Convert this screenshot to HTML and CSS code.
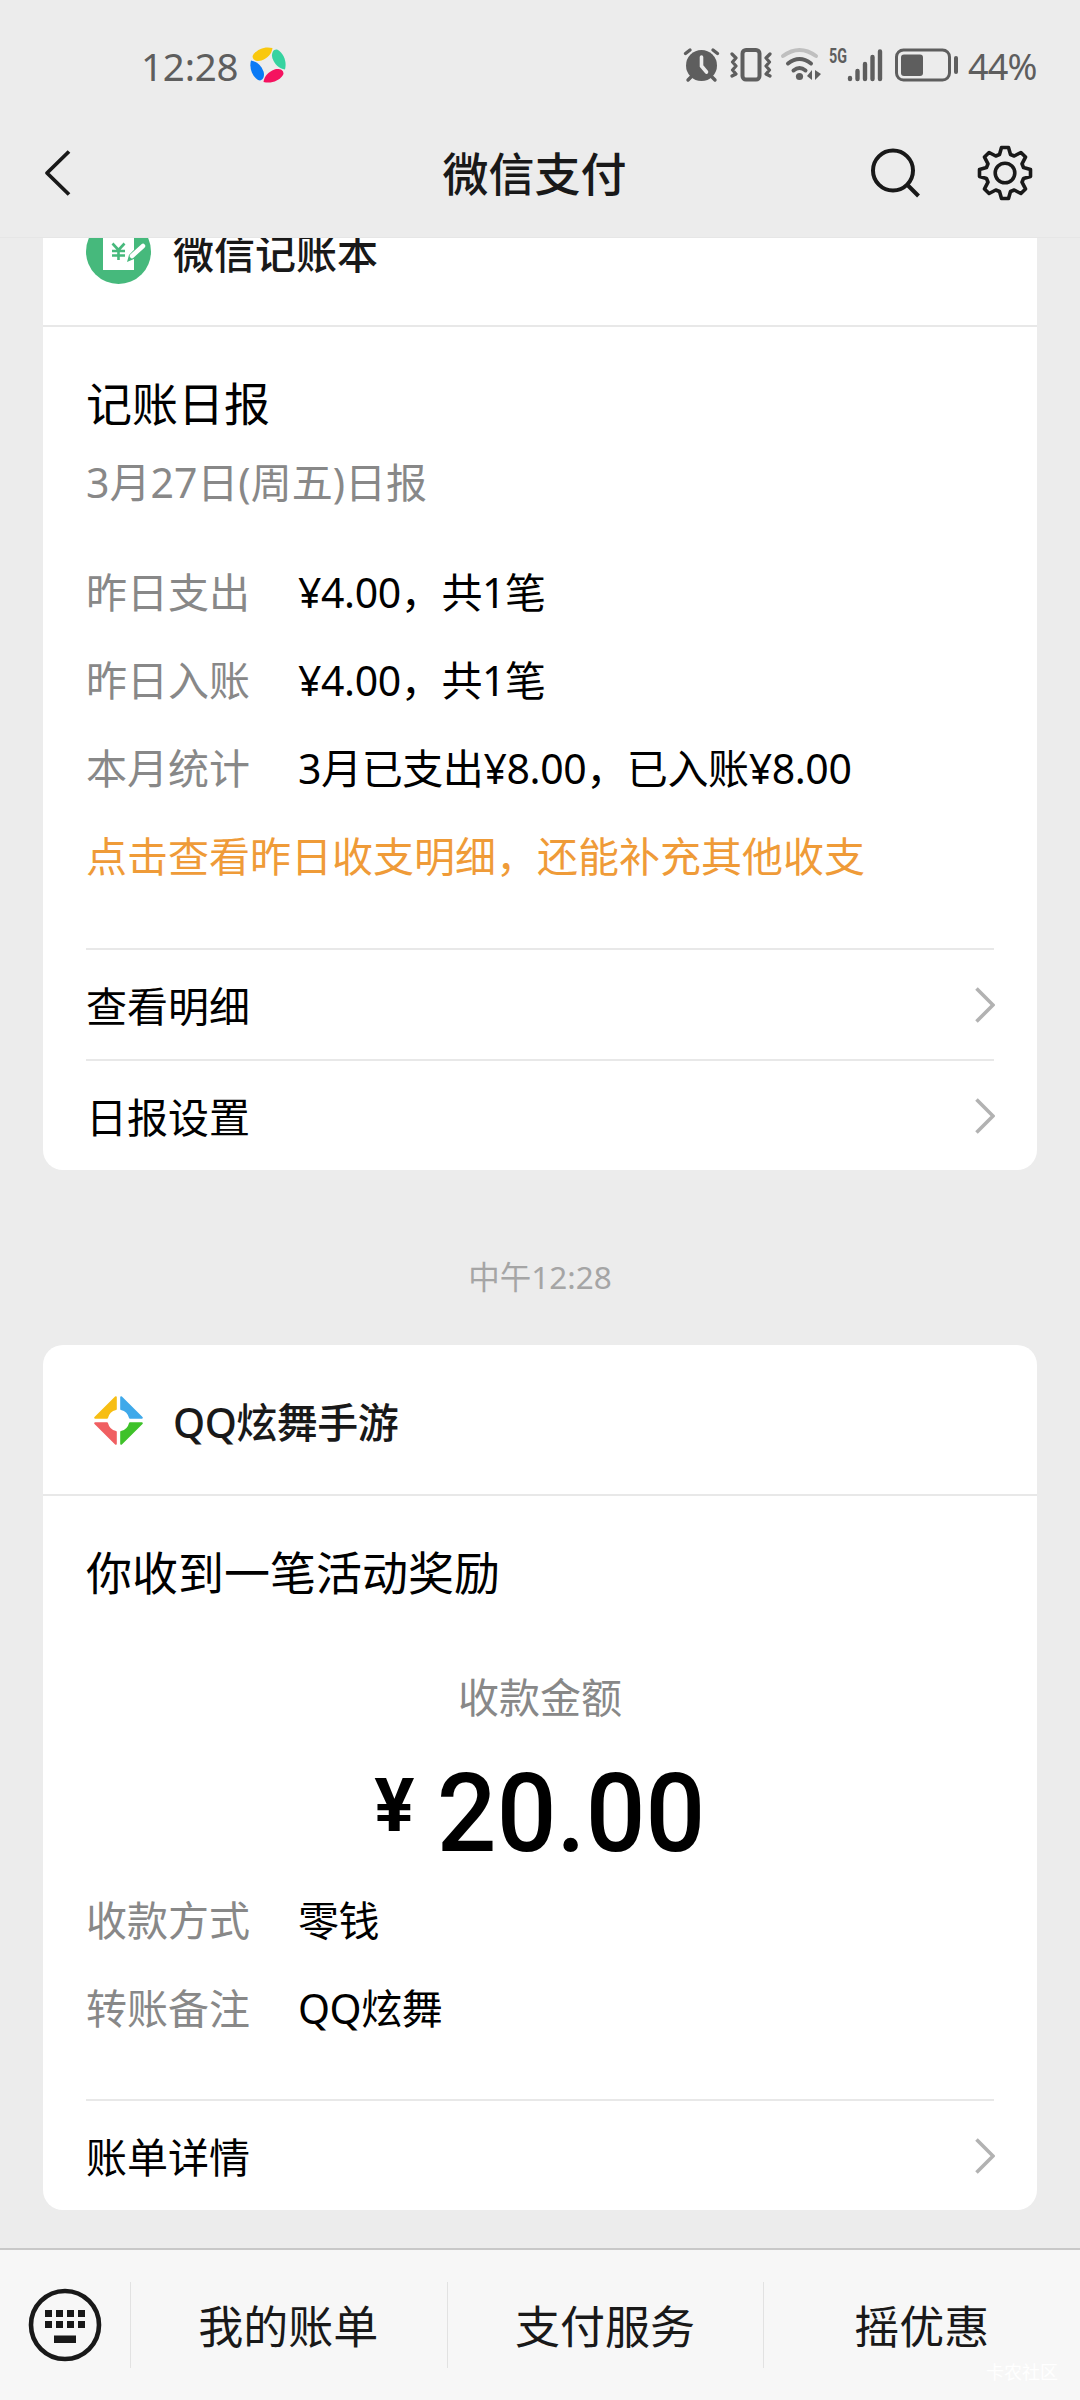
FILE: index.html
```html
<!DOCTYPE html>
<html lang="zh-CN">
<head>
<meta charset="utf-8">
<title>微信支付</title>
<link rel="stylesheet" href="styles.css">
</head>
<body>
<div class="screen">
  <div class="status">
    <span class="clock">12:28</span>
    <svg class="app-dot" width="36" height="36" viewBox="-18 -18 36 36">
      <defs><path id="petal" d="M4.500-17C-3-19-11-16-15-10C-17-5-11-3-6.500-4.500C0-7 3.500-11 4.500-17Z"/></defs>
      <use href="#petal" fill="#f9c80e"/>
      <use href="#petal" fill="#36d3a0" transform="rotate(90)"/>
      <use href="#petal" fill="#f5125f" transform="rotate(180)"/>
      <use href="#petal" fill="#0a7af5" transform="rotate(270)"/>
    </svg>
    <div class="indicators">
      <svg class="signals" width="268" height="36" viewBox="0 0 268 36" fill="none" stroke="#5e5e5e" stroke-linecap="round">
        <circle cx="17.500" cy="18.500" r="15.500" fill="#5e5e5e" stroke="none"/>
        <path d="M1.500 6.500L6 3M33.500 6.500L29 3M7 30L4 33M28 30L31 33" stroke-width="3.400"/>
        <path d="M17.500 10V19L22.500 25" stroke="#ececec" stroke-width="3.600"/>
        <rect x="58.500" y="3" width="17" height="29.500" rx="3.500" stroke-width="4"/>
        <path d="M48 7L52 11L48.500 15L52 19L48.500 23L52 27L48 29M86 7L82 11L85.500 15L82 19L85.500 23L82 27L86 29" stroke-width="3.200" stroke-linejoin="round"/>
        <path d="M99 9Q115.500-3 132 9" stroke="#bfbfbf" stroke-width="4"/>
        <path d="M104 16.500Q115.500 7.500 127 16.500M109.500 23.500Q115.500 18.500 121.500 23.500" stroke-width="4"/>
        <circle cx="115.500" cy="29.500" r="3.600" fill="#5e5e5e" stroke="none"/>
        <path d="M128 23V33L123 29ZM131 23L137 27L131 33Z" fill="#5e5e5e" stroke="none"/>
        <path d="M166 31V32M173.500 24V32M181 17V32M188.500 10V32M196 4.500V32" stroke-width="4.400"/>
        <rect x="212.500" y="3" width="53" height="30" rx="7" stroke-width="3"/>
        <rect x="217" y="7.500" width="22" height="21.500" rx="3" fill="#5e5e5e" stroke="none"/>
        <text class="network" x="145" y="16" textLength="18" lengthAdjust="spacingAndGlyphs" fill="#5e5e5e" stroke="none">5G</text>
      </svg>
      <span class="battery-cap"></span>
      <span class="percent">44%</span>
    </div>
  </div>

  <div class="navbar">
    <svg width="30" height="50" viewBox="0 0 30 50" fill="none" stroke="#191919" stroke-width="3.800" stroke-linejoin="round"><path d="M26 3.500L4 25L26 46.500"/></svg>
    <h1>微信支付</h1>
    <div class="nav-actions">
      <svg width="54" height="54" viewBox="0 0 54 54" fill="none" stroke="#191919" stroke-width="4"><circle cx="24" cy="24.500" r="20"/><path d="M38 38.500L49.500 50"/></svg>
      <svg width="58" height="58" viewBox="-29 -29 58 58" fill="none" stroke="#191919" stroke-width="3.600" stroke-linejoin="round">
        <path d="M-5.500-18.500L-3.500-25.500H3.500L5.500-18.500L9.200-17L15.900-20.500L20.500-15.900L17-9.200L18.500-5.500L25.500-3.500V3.500L18.500 5.500L17 9.200L20.500 15.900L15.900 20.500L9.200 17L5.500 18.500L3.500 25.500H-3.500L-5.500 18.500L-9.200 17L-15.900 20.500L-20.500 15.900L-17 9.200L-18.500 5.500L-25.500 3.500V-3.500L-18.500-5.500L-17-9.200L-20.500-15.900L-15.900-20.500L-9.200-17Z"/>
        <circle r="9.800"/>
      </svg>
    </div>
  </div>

  <main class="feed">
    <section class="card card-report">
      <header class="card-head">
        <svg width="65" height="65" viewBox="0 0 65 65">
          <circle cx="32.500" cy="32.500" r="32.500" fill="#46b97c"/>
          <path d="M17 12H48V51H17Z" fill="#fff"/>
          <path d="M26.500 24.500L32.500 31L38.500 24.500M32.500 31V41M26 32H39M26 36.500H39" fill="none" stroke="#46b97c" stroke-width="2.600"/>
          <path d="M41 43L43 36L55 23.500L60 28L48 40Z" fill="#46b97c"/>
          <path d="M46 37L57 27" stroke="#fff" stroke-width="4.500" stroke-linecap="round"/>
        </svg>
        <span>微信记账本</span>
      </header>
      <div class="card-body">
        <h2>记账日报</h2>
        <p class="sub">3月27日(周五)日报</p>
        <dl>
          <div><dt>昨日支出</dt><dd>¥4.00，共1笔</dd></div>
          <div><dt>昨日入账</dt><dd>¥4.00，共1笔</dd></div>
          <div><dt>本月统计</dt><dd>3月已支出¥8.00，已入账¥8.00</dd></div>
        </dl>
        <p class="hint">点击查看昨日收支明细，还能补充其他收支</p>
      </div>
      <nav class="links">
        <a>查看明细<svg class="chev" width="22" height="38" viewBox="0 0 22 38"><path d="M3.500 2.500L20 19L3.500 35.500"/></svg></a>
        <a>日报设置<svg class="chev" width="22" height="38" viewBox="0 0 22 38"><path d="M3.500 2.500L20 19L3.500 35.500"/></svg></a>
      </nav>
    </section>

    <time>中午12:28</time>

    <section class="card">
      <header class="card-head">
        <svg width="65" height="65" viewBox="-32.500 -32.500 65 65" stroke-width="2" stroke-linejoin="round">
          <path d="M-2.700-23.300V-11.500A11.800 11.800 0 0 0-11.500-2.700H-23.300Z" fill="#f7be13" stroke="#f7be13"/>
          <path d="M2.700-23.300V-11.500A11.800 11.800 0 0 1 11.500-2.700H23.300Z" fill="#3fa9ea" stroke="#3fa9ea"/>
          <path d="M-2.700 23.300V11.500A11.800 11.800 0 0 1-11.500 2.700H-23.300Z" fill="#f05f62" stroke="#f05f62"/>
          <path d="M2.700 23.300V11.500A11.800 11.800 0 0 0 11.500 2.700H23.300Z" fill="#3fc22a" stroke="#3fc22a"/>
        </svg>
        <span class="game-name">QQ炫舞手游</span>
      </header>
      <div class="card-body">
        <h2>你收到一笔活动奖励</h2>
        <p class="amount-label">收款金额</p>
        <p class="amount"><span class="yen">¥</span><span class="digits">20.00</span></p>
        <dl>
          <div><dt>收款方式</dt><dd>零钱</dd></div>
          <div><dt>转账备注</dt><dd>QQ炫舞</dd></div>
        </dl>
      </div>
      <nav class="links links-bill">
        <a>账单详情<svg class="chev" width="22" height="38" viewBox="0 0 22 38"><path d="M3.500 2.500L20 19L3.500 35.500"/></svg></a>
      </nav>
    </section>
  </main>

  <footer class="menu">
    <div class="keyboard">
      <svg width="74" height="74" viewBox="0 0 74 74" fill="#191919">
        <circle cx="37" cy="37" r="34" fill="none" stroke="#191919" stroke-width="4.600"/>
        <path d="M17 22h7v7h-7zM28 22h7v7h-7zM39 22h7v7h-7zM50 22h7v7h-7zM17 33h7v7h-7zM28 33h7v7h-7zM39 33h7v7h-7zM50 33h7v7h-7zM26 47.500h22v7.500h-22z"/>
      </svg>
    </div>
    <span class="item">我的账单</span>
    <span class="item">支付服务</span>
    <span class="item">摇优惠</span>
    <span class="mark">卡农社区</span>
  </footer>
</div>
</body>
</html>
```

FILE: styles.css
```css
* { box-sizing: border-box; margin: 0; padding: 0; }

body {
  background: #ececec;
  color: #000;
  font: 41px/60px "Noto Sans", "Noto Sans CJK SC", sans-serif;
}

svg { display: block; flex: none; }

.screen {
  width: 1080px;
  height: 2400px;
  display: flex;
  flex-direction: column;
  overflow: hidden;
}

/* status bar */
.status {
  height: 130px;
  padding: 0 43px 0 141px;
  display: flex;
  align-items: center;
  color: #5e5e5e;
}
.clock { width: 109px; padding-top: 2px; font-size: 38.5px; letter-spacing: -.2px; }
.indicators { margin-left: auto; display: flex; align-items: center; }
.signals { overflow: visible; }
.network { font: 700 21px "Roboto", sans-serif; }
.battery-cap { width: 4px; height: 18px; margin: 0 10px 0 2px; border-radius: 2px; background: #5e5e5e; }
.percent { width: 69px; padding-top: 3px; font-size: 36px; letter-spacing: -.8px; }

/* title bar */
.navbar {
  height: 108px;
  padding: 0 46px 22px 43px;
  display: flex;
  align-items: center;
  justify-content: space-between;
  border-bottom: 1px solid #e6e6e6;
}
.navbar h1 { margin-left: 127px; font-size: 46px; font-weight: 500; color: #191919; }
.nav-actions { display: flex; align-items: center; gap: 53px; }

/* message feed */
.feed { flex: 1; overflow: hidden; padding: 0 43px; }
.card { background: #fff; border-radius: 20px; }
.card-report { margin-top: -62px; }
.card-head {
  height: 151px;
  padding: 2px 43px 0;
  display: flex;
  align-items: center;
  gap: 22px;
  border-bottom: 2px solid #e8e8e8;
  font-weight: 500;
  color: #191919;
}
.card-head span { padding-top: 2px; }
.game-name { letter-spacing: -.5px; }
.card-body { padding: 46px 43px 0; }
h2 { font-size: 46px; font-weight: 400; }
.sub { margin-top: 19px; color: #888; }
.card-body dl { margin-top: 50px; }
dl div { display: flex; height: 88px; }
dt { width: 212px; color: #888; }
dd { letter-spacing: -.4px; }
.hint { color: #ef9b38; }
.links { margin: 62px 43px 0; }
.links a {
  height: 111px;
  padding-top: 2px;
  display: flex;
  align-items: center;
  justify-content: space-between;
  border-top: 2px solid #e8e8e8;
}
.chev { margin: -2px -1px 0 0; fill: none; stroke: #b2b2b2; stroke-width: 3.6; }

.feed time {
  display: block;
  padding: 77px 0 38px;
  text-align: center;
  font-size: 31.5px;
  color: #a5a5a5;
}

.amount-label { margin-top: 65px; text-align: center; color: #888; }
.amount {
  height: 163px;
  padding: 6px 0 0 4px;
  display: flex;
  justify-content: center;
  font: 500 109px/163px "Roboto", sans-serif;
}
.yen { margin-right: 17px; font-size: 75px; font-weight: 700; line-height: 144px; }
.digits { transform: scaleX(.965); }
.card-body .amount + dl { margin-top: 0; }
.links-bill { margin-top: 33px; }

/* bottom menu */
.menu {
  position: relative;
  height: 152px;
  border-top: 2px solid #c8c8c8;
  background: #f7f7f7;
  display: flex;
  align-items: center;
  font-size: 45px;
  color: #191919;
}
.keyboard { width: 130px; padding-left: 28px; }
.item {
  flex: 1;
  height: 86px;
  padding-right: 1px;
  line-height: 89px;
  text-align: center;
  border-left: 1px solid #e2e2e2;
}
.mark { position: absolute; right: 22px; bottom: 16px; font-size: 18px; line-height: 24px; color: #fff; }
```
